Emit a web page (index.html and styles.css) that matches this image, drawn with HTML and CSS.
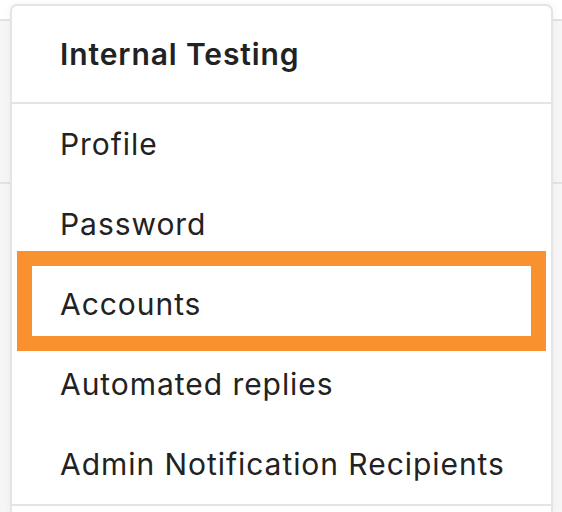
FILE: index.html
```html
<!DOCTYPE html>
<html lang="en">
<head>
<meta charset="utf-8">
<title>Menu</title>
<link rel="stylesheet" href="styles.css">
</head>
<body>
<div class="card">
  <div class="card-header">Internal Testing</div>
  <ul class="menu">
    <li class="item">Profile</li>
    <li class="item">Password</li>
    <li class="item item-highlight">Accounts<span class="highlight"></span></li>
    <li class="item">Automated replies</li>
    <li class="item">Admin Notification Recipients</li>
  </ul>
</div>
</body>
</html>
```
FILE: styles.css
```css
html, body {
  margin: 0;
  padding: 0;
}
body {
  width: 562px;
  height: 512px;
  overflow: hidden;
  font-family: Inter, "Noto Sans", sans-serif;
  color: #222;
  background: linear-gradient(to bottom,
    #ffffff 0 19px,
    #e3e3e3 19px 21px,
    #f6f6f6 21px 182px,
    #e3e3e3 182px 184px,
    #f6f6f6 184px);
  padding-top: 4px;
  box-sizing: border-box;
}
.card {
  margin-left: 10px;
  width: 543px;
  height: 508px;
  box-sizing: border-box;
  background: #fff;
  border: 2px solid #e4e4e4;
  border-bottom: none;
  border-radius: 7px 7px 0 0;
  box-shadow: 0 0 10px rgba(0, 0, 0, 0.05);
}
.card-header {
  height: 96px;
  line-height: 96px;
  padding-left: 48px;
  font-size: 30px;
  font-weight: 600;
  letter-spacing: 0.9px;
  border-bottom: 2px solid #e4e4e4;
}
.menu {
  list-style: none;
  margin: 0;
  padding: 0;
  border-bottom: 2px solid #e4e4e4;
}
.item {
  height: 80px;
  line-height: 80px;
  padding-left: 48px;
  font-size: 30px;
  font-weight: 400;
  letter-spacing: 0.95px;
  position: relative;
}
.highlight {
  position: absolute;
  left: 5px;
  right: 5px;
  top: -13px;
  bottom: -7px;
  border: 15px solid #f9922e;
  pointer-events: none;
}
```
